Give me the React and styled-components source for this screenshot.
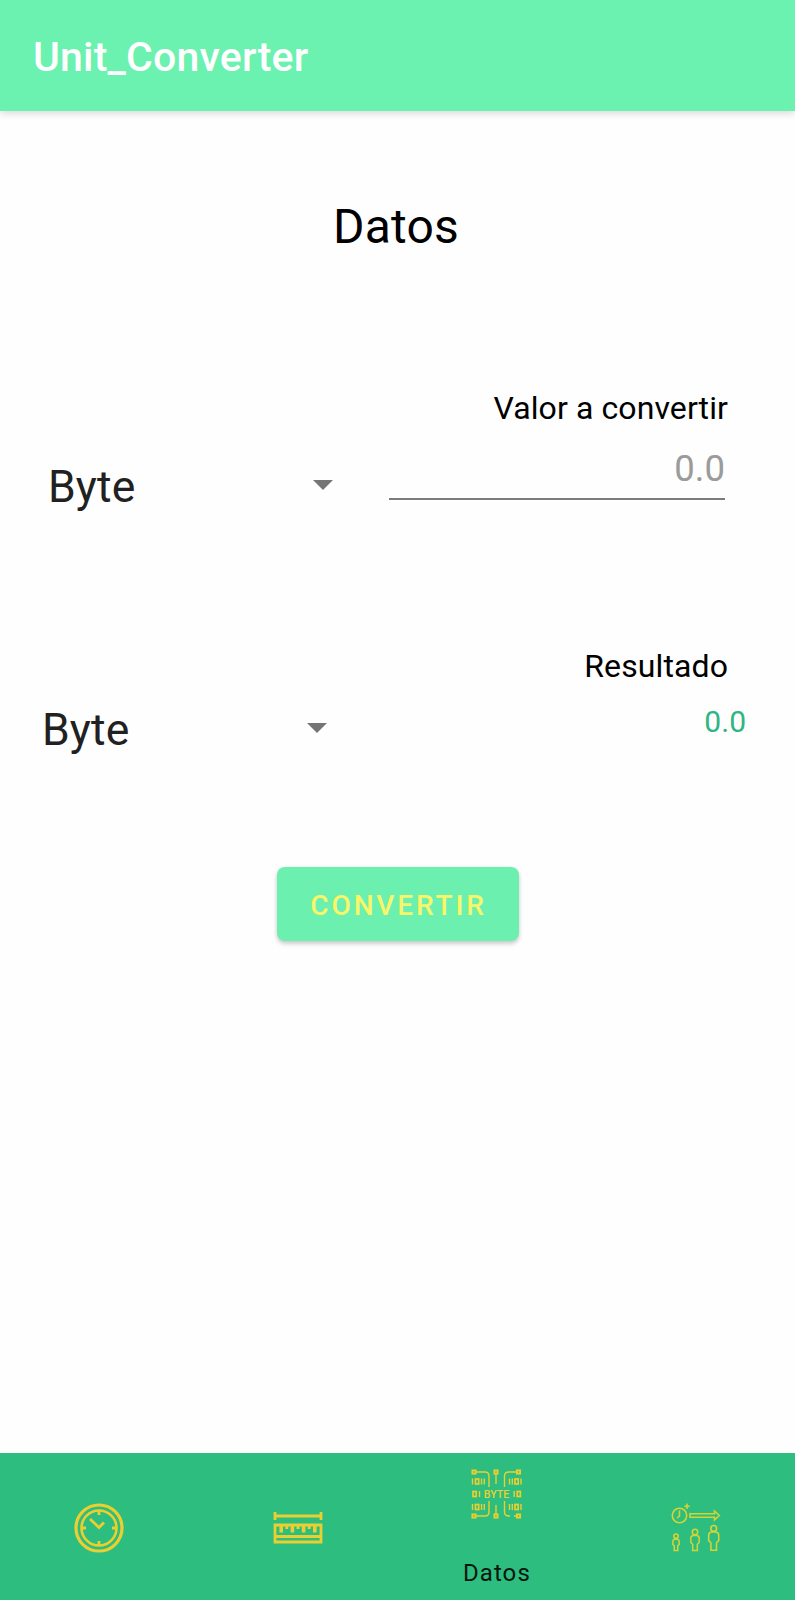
import React from "react";
import styled, { createGlobalStyle } from "styled-components";

const GlobalStyle = createGlobalStyle`
  * { box-sizing: border-box; }
  body { margin: 0; background: #fefefe; font-family: Roboto, sans-serif; }
`;

const Screen = styled.div`
  width: 795px;
  height: 1600px;
  display: flex;
  flex-direction: column;
  overflow: hidden;
  background: #fefefe;
`;

const AppBar = styled.header`
  height: 111px;
  flex: none;
  display: flex;
  align-items: center;
  padding: 2px 33px 0;
  background: #6bf1b0;
  box-shadow: 0 2px 8px rgba(0, 0, 0, 0.16);
`;

const AppTitle = styled.h1`
  margin: 0;
  font-size: 41px;
  font-weight: 500;
  line-height: 48px;
  letter-spacing: 0.2px;
  color: #fff;
`;

const Content = styled.main`
  flex: 1;
  display: flex;
  flex-direction: column;
  align-items: center;
  padding-top: 86px;
`;

const PageTitle = styled.h2`
  margin: 0 3px 0 0;
  font-size: 48px;
  font-weight: 400;
  line-height: 60px;
  letter-spacing: 0.2px;
  color: #000;
`;

const Row = styled.section`
  width: 100%;
  display: flex;
  justify-content: space-between;
  align-items: flex-start;
  margin-top: ${(p) => p.$gap}px;
  height: ${(p) => p.$height}px;
`;

const Select = styled.div`
  display: flex;
  align-items: center;
  justify-content: space-between;
  width: 285px;
  height: 60px;
  margin: ${(p) => p.$top}px 0 0 ${(p) => p.$left}px;
  font-size: 44.5px;
  line-height: 60px;
  letter-spacing: 0.1px;
  color: #212121;
`;

const Caret = styled.svg`
  width: 20px;
  height: 10px;
  margin-bottom: ${(p) => p.$lift}px;
`;

const Field = styled.div`
  display: flex;
  flex-direction: column;
  align-items: flex-end;
  width: 357px;
  margin-right: 49px;
`;

const Label = styled.label`
  font-size: 32px;
  line-height: 40px;
  letter-spacing: 0.1px;
  color: #000;
  margin-right: 18px;
`;

const Input = styled.div`
  width: 336px;
  height: 54px;
  margin: 18px 21px 0 0;
  border-bottom: 2px solid #7b7c7b;
  font-size: 36.5px;
  line-height: 46px;
  text-align: right;
  color: #9b9b9b;
`;

const Result = styled.output`
  margin-top: 16px;
  font-size: 30px;
  line-height: 40px;
  color: #2fb583;
`;

const Button = styled.button`
  width: 242px;
  height: 74px;
  margin-top: 107px;
  padding: 4px 0 0 2px;
  border: 0;
  border-radius: 8px;
  background: #6cf0b0;
  box-shadow: 0 3px 4px rgba(0, 0, 0, 0.16), 0 1px 5px rgba(0, 0, 0, 0.08);
  color: #f8f568;
  font: 500 28px/40px Roboto, sans-serif;
  letter-spacing: 2.85px;
`;

const NavBar = styled.nav`
  flex: none;
  height: 147px;
  display: grid;
  grid-template-columns: repeat(4, 1fr);
  background: #2dbd7e;
`;

const NavItem = styled.a`
  display: flex;
  flex-direction: column;
  align-items: center;
  padding-top: ${(p) => (p.$active ? 15 : 49)}px;
`;

const NavIcon = styled.svg`
  width: 52px;
  height: 52px;
  fill: none;
  stroke: #ebcf30;
  stroke-width: 2;
  overflow: visible;
`;

const NavLabel = styled.span`
  margin-top: 37px;
  font-size: 24px;
  line-height: 32px;
  letter-spacing: 1.1px;
  color: #06170f;
`;

const ByteText = styled.text`
  font: 500 11.5px Roboto, sans-serif;
  fill: #ebd034;
  stroke: none;
`;

const Arrow = ({ lift }) => (
  <Caret viewBox="0 0 20 10" $lift={lift}>
    <path d="M0 0H20L10 10Z" fill="#757575" />
  </Caret>
);

const ClockIcon = () => (
  <NavIcon viewBox="0 0 52 52">
    <circle cx="26" cy="26" r="23" strokeWidth="3.2" />
    <circle cx="26" cy="26" r="17.5" strokeWidth="2.6" />
    <path d="M17 17L26 25.5L31 20.5" strokeWidth="2.8" />
    <path d="M26 9v4M26 39v4M9 26h4M39 26h4" strokeWidth="2.8" />
  </NavIcon>
);

const RulerIcon = () => (
  <NavIcon viewBox="0 0 52 52">
    <path d="M3 10v8M49 10v8M3 14H49" strokeWidth="2.8" />
    <path d="M3 23H49V40H3ZM3 34.5H49" strokeWidth="2.8" />
    <path d="M9.2 24v6.5M20.4 24v6.5M31.6 24v6.5M42.8 24v6.5" strokeWidth="3.6" />
    <path d="M14.8 24v3M26 24v3M37.2 24v3" strokeWidth="3" />
  </NavIcon>
);

const ByteIcon = () => (
  <NavIcon viewBox="0 0 52 52">
    <g strokeWidth="1.4">
      {[[3, 4], [25, 4], [47.5, 4], [3, 48], [25, 48], [47.5, 48]].map(([x, y]) => (
        <rect key={`${x}-${y}`} x={x - 1.6} y={y - 1.6} width="3.2" height="3.2" strokeWidth="1.9" />
      ))}
      <path d="M5 4H14Q18 4 18 8V19M46 4H38Q33.5 4 33.5 8V19M5 48H14Q18 48 18 44V33M46 48H43M39 48H38Q33.5 48 33.5 44V33M25 6V16M25 46V37" />
      <path d="M1.5 10.5v6M10.5 10.5v6M13.3 10.5v6M38.5 10.5v6M41.3 10.5v6M50 10.5v6" />
      <path d="M1.5 36v6M10.5 36v6M13.3 36v6M38.5 36v6M50 36v6M41.3 36v6" />
      <path d="M8.5 23v6M43.2 23v6" />
      <g strokeWidth="1.7">
        <rect x="4.5" y="11" width="3.2" height="5" />
        <rect x="44" y="11" width="3.2" height="5" />
        <rect x="4.5" y="36.5" width="3.2" height="5" />
        <rect x="44" y="36.5" width="3.2" height="5" />
        <rect x="2" y="23.5" width="3.2" height="5" />
        <rect x="46.2" y="23.5" width="3.2" height="5" />
      </g>
    </g>
    <ByteText x="12.8" y="30.3" textLength="25.5" lengthAdjust="spacingAndGlyphs">BYTE</ByteText>
  </NavIcon>
);

const PERSON =
  "M-2 0Q-4.5 .5 -4.5 3V8L-2.5 10V17H2.5V10L4.5 8V3Q4.5 .5 2 0Z";

const GrowthIcon = () => (
  <NavIcon viewBox="0 0 52 52">
    <g strokeWidth="1.6" stroke="#d3d436">
      <circle cx="9.5" cy="13.5" r="7.2" />
      <path d="M9.5 8.5V14L7 16M17 1.5V7M14.3 4.2H19.8" />
      <path d="M20 11.8H44.5V9L49.3 13.5L44.5 18V15.2H20Z" />
      <circle cx="6" cy="34.2" r="2.2" />
      <path transform="translate(6 37.2) scale(.7 .66)" d={PERSON} strokeWidth="2.2" />
      <circle cx="25" cy="30" r="2.7" />
      <path transform="translate(25 33.5) scale(.93 .88)" d={PERSON} />
      <circle cx="43.7" cy="26.4" r="2.9" />
      <path transform="translate(43.7 30) scale(1.12 1.08)" d={PERSON} strokeWidth="1.4" />
    </g>
  </NavIcon>
);

export default function App() {
  return (
    <>
      <GlobalStyle />
      <Screen>
        <AppBar>
          <AppTitle>Unit_Converter</AppTitle>
        </AppBar>
        <Content>
          <PageTitle>Datos</PageTitle>
          <Row $gap={131} $height={128}>
            <Select $top={69} $left={48}>Byte<Arrow lift={5} /></Select>
            <Field>
              <Label>Valor a convertir</Label>
              <Input>0.0</Input>
            </Field>
          </Row>
          <Row $gap={130} $height={114}>
            <Select $top={54} $left={42}>Byte<Arrow lift={4} /></Select>
            <Field>
              <Label>Resultado</Label>
              <Result>0.0</Result>
            </Field>
          </Row>
          <Button>CONVERTIR</Button>
        </Content>
        <NavBar>
          <NavItem><ClockIcon /></NavItem>
          <NavItem><RulerIcon /></NavItem>
          <NavItem $active>
            <ByteIcon />
            <NavLabel>Datos</NavLabel>
          </NavItem>
          <NavItem><GrowthIcon /></NavItem>
        </NavBar>
      </Screen>
    </>
  );
}
